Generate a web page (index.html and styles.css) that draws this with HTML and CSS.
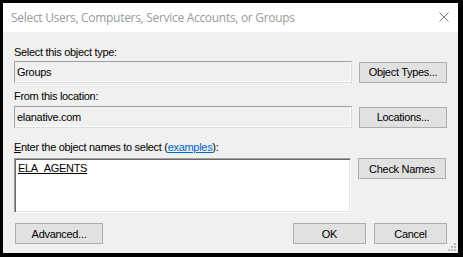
FILE: index.html
```html
<!DOCTYPE html>
<html lang="en">
<head>
  <meta charset="UTF-8" />
  <title>Select Users, Computers, Service Accounts, or Groups</title>
  <link rel="stylesheet" href="styles.css">
</head>
<body>

  <div class="dialog">
    <div class="titlebar">
      <span class="title">Select Users, Computers, Service Accounts, or Groups</span>
      <button class="close" type="button" aria-label="Close">
        <svg width="10" height="10" viewBox="0 0 10 10">
          <path d="M0.5 0.5 L9.5 9.5 M9.5 0.5 L0.5 9.5" stroke="#7a7a7a" stroke-width="1" fill="none" />
        </svg>
      </button>
    </div>

    <div class="content">
      <label class="label first" for="objType">Select this object type:</label>
      <div class="row">
        <input class="field" id="objType" type="text" value="Groups" readonly />
        <button class="btn side" type="button">Object Types...</button>
      </div>

      <label class="label second" for="location">From this location:</label>
      <div class="row">
        <input class="field" id="location" type="text" value="elanative.com" readonly />
        <button class="btn side" type="button">Locations...</button>
      </div>

      <label class="label third" for="names"><u>E</u>nter the object names to select (<a href="#">examples</a>):</label>
      <div class="row top">
        <div class="names" id="names"><u>ELA_AGENTS</u></div>
        <button class="btn side" type="button">Check Names</button>
      </div>

      <div class="footer">
        <button class="btn advanced" type="button">Advanced...</button>
        <div class="actions">
          <button class="btn ok" type="button">OK</button>
          <button class="btn cancel" type="button">Cancel</button>
        </div>
      </div>

      <svg class="grip" width="8" height="8" viewBox="0 0 8 8">
        <rect x="6" y="0" width="2" height="2" fill="#bcbcbc" />
        <rect x="3" y="3" width="2" height="2" fill="#bcbcbc" />
        <rect x="6" y="3" width="2" height="2" fill="#bcbcbc" />
        <rect x="0" y="6" width="2" height="2" fill="#bcbcbc" />
        <rect x="3" y="6" width="2" height="2" fill="#bcbcbc" />
        <rect x="6" y="6" width="2" height="2" fill="#bcbcbc" />
      </svg>
    </div>
  </div>

</body>
</html>
```

FILE: styles.css
```css
* {
  box-sizing: border-box;
}

body {
  margin: 0;
  background: #000;
  width: 463px;
  height: 257px;
  padding: 3px 0 0 3px;
  font-family: 'Liberation Sans', Arial, sans-serif;
  font-size: 11px;
  letter-spacing: -0.3px;
  color: #000;
}

.dialog {
  width: 455px;
  height: 250px;
  background: #f0f0f0;
  display: flex;
  flex-direction: column;
}

.titlebar {
  height: 29px;
  background: #fff;
  display: flex;
  align-items: center;
  justify-content: space-between;
  padding: 0 0 0 8px;
}

.title {
  font-family: 'Open Sans', 'Noto Sans', sans-serif;
  font-size: 12px;
  letter-spacing: -0.3px;
  color: #9a9a9a;
  margin-top: -1px;
}

.close {
  background: none;
  border: none;
  padding: 0;
  width: 10px;
  height: 10px;
  margin-right: 9px;
  margin-top: -2px;
  display: flex;
}

.content {
  flex: 1;
  position: relative;
  padding: 0 11px;
}

.label {
  display: block;
  line-height: 13px;
  white-space: nowrap;
}

.label.first {
  margin-top: 14px;
  margin-bottom: 2px;
}

.label.second {
  margin-top: 7px;
  margin-bottom: 3px;
}

.label.third {
  margin-top: 13px;
  margin-bottom: 4px;
}

.label a {
  color: #0066cc;
}

.row {
  display: flex;
  align-items: center;
  gap: 7px;
}

.row.top {
  align-items: flex-start;
}

.field {
  width: 338px;
  height: 22px;
  font-family: inherit;
  font-size: 11px;
  letter-spacing: inherit;
  padding: 0 2px;
  background: #f0f0f0;
  border: 1px solid #a0a0a0;
  border-right-color: #dcdcdc;
  border-bottom-color: #dcdcdc;
  box-shadow: inset -1px -1px #fff;
  outline: none;
}

.names {
  width: 337px;
  height: 55px;
  background: #fff;
  border: 1px solid #a0a0a0;
  border-right-color: #fff;
  border-bottom-color: #fff;
  box-shadow: inset 1px 1px #696969, inset -1px -1px #e3e3e3;
  padding: 3px 0 0 3px;
  line-height: 13px;
}

.btn {
  font-family: inherit;
  font-size: 11px;
  letter-spacing: inherit;
  color: #000;
  background: #e1e1e1;
  border: 1px solid #adadad;
  height: 21px;
  padding: 0;
}

.btn.side {
  width: 88px;
}

.footer {
  display: flex;
  justify-content: space-between;
  margin-top: 10px;
  padding-left: 1px;
}

.advanced {
  width: 88px;
}

.actions {
  display: flex;
  gap: 8px;
}

.ok,
.cancel {
  width: 73px;
}

.grip {
  position: absolute;
  right: 2px;
  bottom: 2px;
}
```
